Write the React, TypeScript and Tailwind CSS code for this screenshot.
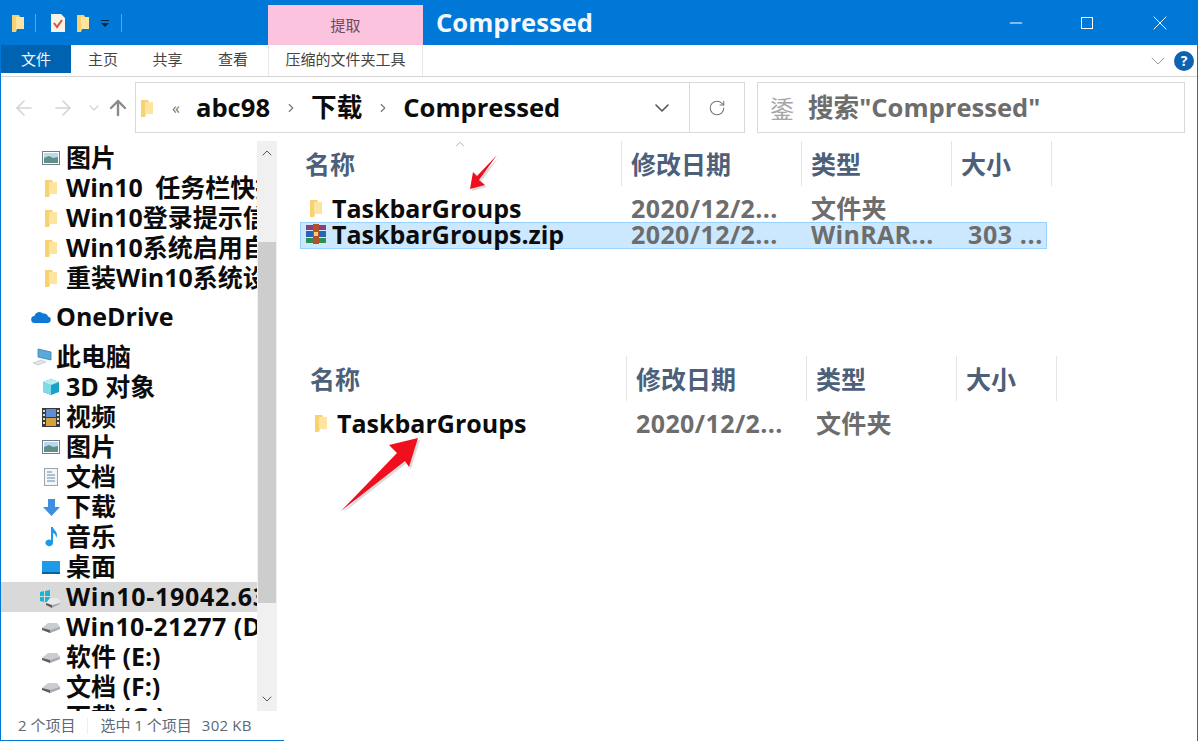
import type { ReactNode } from "react";
import { ChevronDown, ChevronRight, ChevronUp, ArrowUp, ArrowLeft, ArrowRight, RotateCw, Minus, X } from "lucide-react";

const FONT = "font-['Open_Sans','Noto_Sans_CJK_SC',sans-serif]";

const Folder = ({ className = "" }: { className?: string }) => (
  <svg width="12" height="18" viewBox="0 0 12 18" className={className}>
    <path d="M0 1h7l1 2h4v12H5l-1 3H0z" fill="#f8d272" />
    <path d="M4 3h8v12H4z" fill="#fde59f" />
  </svg>
);

const Picture = () => (
  <svg width="18" height="14" viewBox="0 0 18 14">
    <rect x="0.5" y="0.5" width="17" height="13" fill="#fff" stroke="#6f7f8c" />
    <rect x="2" y="2" width="14" height="5" fill="#b9d8ec" />
    <path d="M2 7l5-2 4 2 5-1v6H2z" fill="#5f8f86" />
  </svg>
);

const Cloud = () => (
  <svg width="21" height="14" viewBox="0 0 21 14">
    <path d="M4 13a3.5 3.5 0 0 1-.6-7A5 5 0 0 1 12 3.600a4 4 0 0 1 5 2.900A3.300 3.300 0 0 1 17 13z" fill="#0f78d4" />
  </svg>
);

const Computer = () => (
  <svg width="20" height="20" viewBox="0 0 20 20">
    <path d="M6 2l13 3v8L6 10z" fill="#5aa9dc" stroke="#3d7ea8" strokeWidth="0.8" />
    <path d="M1 16l8-3 5 2-8 3z" fill="#dfe5ea" stroke="#b5bec6" strokeWidth="0.6" />
  </svg>
);

const Cube = () => (
  <svg width="18" height="18" viewBox="0 0 18 18">
    <path d="M9 1l8 3v10l-8 3-8-3V4z" fill="#1ba1c9" />
    <path d="M1 4l8 3v10l-8-3z" fill="#7fdbe8" />
    <path d="M1 4l8-3 8 3-8 3z" fill="#b8eef2" />
  </svg>
);

const Film = () => (
  <svg width="18" height="19" viewBox="0 0 18 19">
    <rect width="18" height="19" fill="#3a3a3a" />
    <rect x="4" y="1" width="10" height="8" fill="#5c8fd6" />
    <rect x="4" y="10" width="10" height="8" fill="#d6a23c" />
    <path d="M1 2h2v2H1zM1 6h2v2H1zM1 10h2v2H1zM1 14h2v2H1zM15 2h2v2h-2zM15 6h2v2h-2zM15 10h2v2h-2zM15 14h2v2h-2z" fill="#ddd" />
  </svg>
);

const Doc = () => (
  <svg width="14" height="18" viewBox="0 0 14 18">
    <rect x="0.5" y="0.5" width="13" height="17" fill="#f4f6f8" stroke="#9aa5ae" />
    <path d="M3 4h5M3 7h8M3 10h8M3 13h8" stroke="#5f8aa8" />
  </svg>
);

const Download = () => (
  <svg width="17" height="17" viewBox="0 0 17 17">
    <path d="M5 0h7v8h5l-8.500 9L0 8h5z" fill="#3f8fe0" />
  </svg>
);

const Music = () => (
  <svg width="13" height="20" viewBox="0 0 13 20">
    <path d="M6 0h2c.5 3 4 4 4 8 0 1-.3 2-1 3 .2-3-1.500-4.500-3-5v10a3.800 3.300 0 1 1-2-3z" fill="#1e9be8" />
  </svg>
);

const Desktop = () => (
  <svg width="18" height="13" viewBox="0 0 18 13">
    <rect width="18" height="13" fill="#1e9be8" />
    <rect y="11" width="18" height="2" fill="#0f5f9e" />
  </svg>
);

const Drive = () => (
  <svg width="18" height="11" viewBox="0 0 18 11">
    <path d="M0 6l6-5h9l3 4v2L8 11z" fill="#c9cdd1" />
    <path d="M0 6l8 2v3L0 8z" fill="#5c5c5c" />
    <path d="M8 8l10-3v2L8 11z" fill="#a8acb0" />
  </svg>
);

const WinDrive = () => (
  <svg width="22" height="22" viewBox="0 0 22 22" className="shrink-0">
    <path d="M0 6l4-1v5H0zM5 5l5-1v6H5zM0 11h4v5l-4-1zM5 11h5v6l-5-1z" fill="#18b4d8" />
    <path d="M6 17l4-5h8l2 3v2l-8 5z" fill="#e6e8ea" />
    <path d="M6 17l6 2v3l-6-3z" fill="#5c5c5c" />
    <path d="M12 19l8-2v1l-8 4z" fill="#a8acb0" />
  </svg>
);

const Rar = () => (
  <svg width="20" height="20" viewBox="0 0 20 20">
    <rect y="1" width="20" height="5" fill="#8a3f7a" />
    <rect y="7" width="20" height="6" fill="#2d62b5" />
    <rect y="14" width="20" height="5" fill="#2f8f4e" />
    <rect x="7" y="0" width="6" height="20" fill="#b5502e" />
    <rect x="8" y="8" width="4" height="4" fill="#f4d35e" />
  </svg>
);

type NavEntry = { icon: ReactNode; label: string; indent?: boolean; selected?: boolean; gapBefore?: string; textFit?: string };

const navEntries: NavEntry[] = [
  { icon: <Picture />, label: "图片", indent: true },
  { icon: <Folder />, label: "Win10 任务栏快捷方式", indent: true, textFit: "[word-spacing:6px]" },
  { icon: <Folder />, label: "Win10登录提示信息", indent: true },
  { icon: <Folder />, label: "Win10系统启用自动", indent: true },
  { icon: <Folder />, label: "重装Win10系统设置", indent: true },
  { icon: <Cloud />, label: "OneDrive", gapBefore: "mt-[9px]" },
  { icon: <Computer />, label: "此电脑", gapBefore: "mt-[10px]" },
  { icon: <Cube />, label: "3D 对象", indent: true },
  { icon: <Film />, label: "视频", indent: true },
  { icon: <Picture />, label: "图片", indent: true },
  { icon: <Doc />, label: "文档", indent: true },
  { icon: <Download />, label: "下载", indent: true },
  { icon: <Music />, label: "音乐", indent: true },
  { icon: <Desktop />, label: "桌面", indent: true },
  { icon: <WinDrive />, label: "Win10-19042.630", indent: true, selected: true, textFit: "tracking-[0.7px]" },
  { icon: <Drive />, label: "Win10-21277 (D:)", indent: true, textFit: "tracking-[0.4px]" },
  { icon: <Drive />, label: "软件 (E:)", indent: true },
  { icon: <Drive />, label: "文档 (F:)", indent: true },
  { icon: <Drive />, label: "下载 (G:)", indent: true },
];

function NavRow({ entry }: { entry: NavEntry }) {
  return (
    <div
      className={`flex h-[30px] shrink-0 items-center overflow-hidden whitespace-nowrap ${entry.indent ? "pl-[41px]" : "pl-[30px]"} ${entry.selected ? "bg-[#d9d9d9]" : ""} ${entry.gapBefore ?? ""}`}
    >
      <span className={`flex shrink-0 items-center justify-center ${entry.indent ? "w-[18px]" : "w-[21px]"}`}>{entry.icon}</span>
      <span className={`text-[25px] font-bold text-[#0c0c0c] ${entry.indent ? "ml-[6px]" : "ml-[4px]"} ${entry.textFit ?? ""}`}>{entry.label}</span>
    </div>
  );
}

function ColumnHeader() {
  const cols = [
    { label: "名称", w: "w-[322px]", pad: "pl-[5px]" },
    { label: "修改日期", w: "w-[180px]", pad: "pl-[9px]" },
    { label: "类型", w: "w-[150px]", pad: "pl-[9px]" },
    { label: "大小", w: "w-[100px]", pad: "pl-[9px]" },
  ];
  return (
    <div className="flex h-[45px] items-center">
      {cols.map((c) => (
        <div key={c.label} className={`flex h-[45px] items-center border-r border-[#e5e5e5] pt-[1px] ${c.w} ${c.pad} text-[25px] font-bold leading-none text-[#4c607a]`}>
          {c.label}
        </div>
      ))}
    </div>
  );
}

function FileRow({ icon, name, type, size, selected = false }: { icon: ReactNode; name: string; type: string; size?: string; selected?: boolean }) {
  return (
    <div className={`flex h-[27px] w-[747px] items-center whitespace-nowrap border ${selected ? "border-[#99d1ff] bg-[#cce8ff] pb-[3px]" : "border-transparent pb-[2px]"}`}>
      <span className="flex w-[27px] shrink-0 justify-center pl-[3px]">{icon}</span>
      <span className="ml-[4px] w-[299px] shrink-0 text-[25px] font-bold leading-[22px] text-[#0c0c0c]">{name}</span>
      <span className="w-[180px] shrink-0 text-[25px] font-bold leading-[22px] tracking-[0.4px] text-[#6d6d6d]">2020/12/2...</span>
      <span className="w-[157px] shrink-0 text-[25px] font-bold leading-[22px] tracking-[0.3px] text-[#6d6d6d]">{type}</span>
      {size && <span className="text-[25px] font-bold leading-[22px] tracking-[0.6px] text-[#6d6d6d]">{size}</span>}
    </div>
  );
}

export default function App() {
  return (
    <div className={`relative flex h-[741px] w-[1198px] flex-col overflow-hidden border-x border-[#0078d7] bg-white ${FONT}`}>
      {/* title bar */}
      <div className="flex h-[45px] shrink-0 items-end bg-[#0078d7]">
        <div className="flex h-[45px] w-[267px] items-center pl-[11px]">
          <Folder />
          <span className="ml-[11px] h-[18px] w-px bg-[#5aa5e0]" />
          <svg width="14" height="18" viewBox="0 0 14 18" className="ml-[15px]">
            <path d="M0 0h10l4 4v14H0z" fill="#f7f3ea" />
            <path d="M3 9l3 4 5-7" fill="none" stroke="#d9542b" strokeWidth="2" />
          </svg>
          <Folder className="ml-[12px]" />
          <svg width="8" height="8" viewBox="0 0 8 8" className="ml-[12px] mt-[2px]">
            <path d="M0 0h8v1H0zM0 3h8L4 7z" fill="#10263a" />
          </svg>
          <span className="ml-[12px] h-[18px] w-px bg-[#5aa5e0]" />
        </div>
        <div className="flex h-[40px] w-[155px] items-center justify-center bg-[#fbc3de] text-[15px] text-[#6a4a5c]">提取</div>
        <div className="flex h-[45px] flex-1 items-center pl-[13px] pt-[2px] text-[25.600px] font-bold text-[#f2f8fd]">Compressed</div>
        <div className="flex h-[45px] items-center gap-[55px] pr-[25px] text-white">
          <Minus size={20} strokeWidth={1.2} />
          <div className="h-[12px] w-[12px] border border-white" />
          <X size={24} strokeWidth={1} />
        </div>
      </div>

      {/* ribbon tabs */}
      <div className="flex h-[32px] shrink-0 items-stretch border-b border-[#d5d5d5] text-[15px] text-[#444]">
        <div className="mb-[3px] flex w-[70px] items-center justify-center bg-[#0063b1] text-[#f0f6fb]">文件</div>
        <div className="flex w-[64px] items-center justify-center pb-[2px]">主页</div>
        <div className="flex w-[65px] items-center justify-center pb-[2px]">共享</div>
        <div className="flex w-[66px] items-center justify-center pb-[2px]">查看</div>
        <div className="ml-[2px] flex w-[155px] items-center justify-center border-x border-[#e8e8e8] pb-[2px]">压缩的文件夹工具</div>
        <div className="flex flex-1 items-center justify-end gap-[4px] pr-[3px]">
          <ChevronDown size={24} strokeWidth={1} className="text-[#9a9a9a]" />
          <span className="flex h-[20px] w-[20px] items-center justify-center rounded-full bg-[#0f62b0] text-[14px] font-bold leading-none text-white">?</span>
        </div>
      </div>

      {/* address bar */}
      <div className="flex h-[57px] shrink-0 items-center pb-[1px] pt-[5px]">
        <div className="flex w-[134px] items-center pl-[11px] text-[#d4d4d4]">
          <ArrowLeft size={24} strokeWidth={1.6} />
          <ArrowRight size={24} strokeWidth={1.6} className="ml-[15px]" />
          <ChevronDown size={16} strokeWidth={2} className="ml-[11px]" />
          <ArrowUp size={24} strokeWidth={2.4} className="ml-[4px] text-[#8a8a8a]" />
        </div>
        <div className="flex h-[51px] w-[610px] items-stretch border border-[#d9d9d9]">
          <div className="flex flex-1 items-center whitespace-nowrap pl-[5px] text-[25.600px] font-bold text-[#0c0c0c]">
            <Folder />
            <span className="ml-[19px] text-[16px] font-normal text-[#777]">«</span>
            <span className="ml-[16px] pt-[2px]">abc98</span>
            <ChevronRight size={14} className="ml-[14px] text-[#777]" />
            <span className="ml-[13px] pt-[2px]">下载</span>
            <ChevronRight size={14} className="ml-[14px] text-[#777]" />
            <span className="ml-[13px] pt-[2px]">Compressed</span>
            <ChevronDown size={24} strokeWidth={1.6} className="ml-auto mr-[15px] text-[#555]" />
          </div>
          <div className="flex w-[55px] items-center justify-center border-l border-[#d9d9d9] text-[#777]">
            <RotateCw size={18} strokeWidth={1.4} />
          </div>
        </div>
        <div className="ml-[12px] flex h-[51px] w-[428px] items-center whitespace-nowrap border border-[#d9d9d9] pl-[12px]">
          <span className="w-[24px] font-['Noto_Sans_CJK_SC',serif] text-[24px] leading-none text-[#a5a5a5]">鋈</span>
          <span className="ml-[14px] pt-[2px] text-[25.600px] font-bold text-[#6d6d6d]">搜索"Compressed"</span>
        </div>
      </div>

      {/* body */}
      <div className="flex min-h-0 flex-1 pt-[7px]">
        <nav className="flex h-[570px] w-[256px] shrink-0 flex-col overflow-hidden pt-[2px]">
          {navEntries.map((e, i) => (
            <NavRow key={i} entry={e} />
          ))}
        </nav>
        <div className="flex h-[570px] w-[20px] shrink-0 flex-col items-center justify-between bg-[#f0f0f0]">
          <div className="flex w-full flex-1 flex-col items-center">
            <ChevronUp size={16} strokeWidth={1.5} className="mt-[4px] text-[#555]" />
            <div className="mt-[81px] h-[361px] w-[18px] bg-[#cdcdcd]" />
          </div>
          <ChevronDown size={16} strokeWidth={1.5} className="mb-[4px] text-[#555]" />
        </div>
        <main className="relative flex-1 pl-[23px]">
          <ColumnHeader />
          <div className="mt-[9px]">
            <FileRow icon={<Folder />} name="TaskbarGroups" type="文件夹" />
            <FileRow icon={<Rar />} name="TaskbarGroups.zip" type="WinRAR..." size="303 ..." selected />
          </div>
          <div className="ml-[5px] mt-[107px]">
            <ColumnHeader />
            <div className="mt-[9px]">
              <FileRow icon={<Folder />} name="TaskbarGroups" type="文件夹" />
            </div>
          </div>
          <ChevronUp size={14} strokeWidth={1} className="absolute left-[176px] top-[-4px] text-[#777]" />
        </main>
      </div>

      {/* status bar */}
      <div className="absolute bottom-0 left-0 flex h-[30px] w-[283px] items-center whitespace-nowrap border-b border-[#0078d7] pl-[17px] text-[15px] text-[#5a6a78]">
        <span>2 个项目</span>
        <span className="ml-[12px] h-[16px] w-px bg-[#eeeeee]" />
        <span className="ml-[12px]">选中 1 个项目</span>
        <span className="ml-[10px] tracking-[0.2px]">302 KB</span>
      </div>

      {/* red arrows */}
      <svg className="pointer-events-none absolute left-[330px] top-[150px]" width="180" height="370" viewBox="0 0 180 370">
        <g fill="#888888" opacity="0.3" transform="translate(2 2)">
          <path d="M166 5L148 30l6 5-15 4 3-17 4 4z" />
          <path d="M10 361l64-50 4 6 9-29-29 7 8 8z" />
        </g>
        <path d="M166 5L148 30l6 5-15 4 3-17 4 4z" fill="#f00f1c" />
        <path d="M10 361l64-50 4 6 9-29-29 7 8 8z" fill="#f00f1c" />
      </svg>
    </div>
  );
}
